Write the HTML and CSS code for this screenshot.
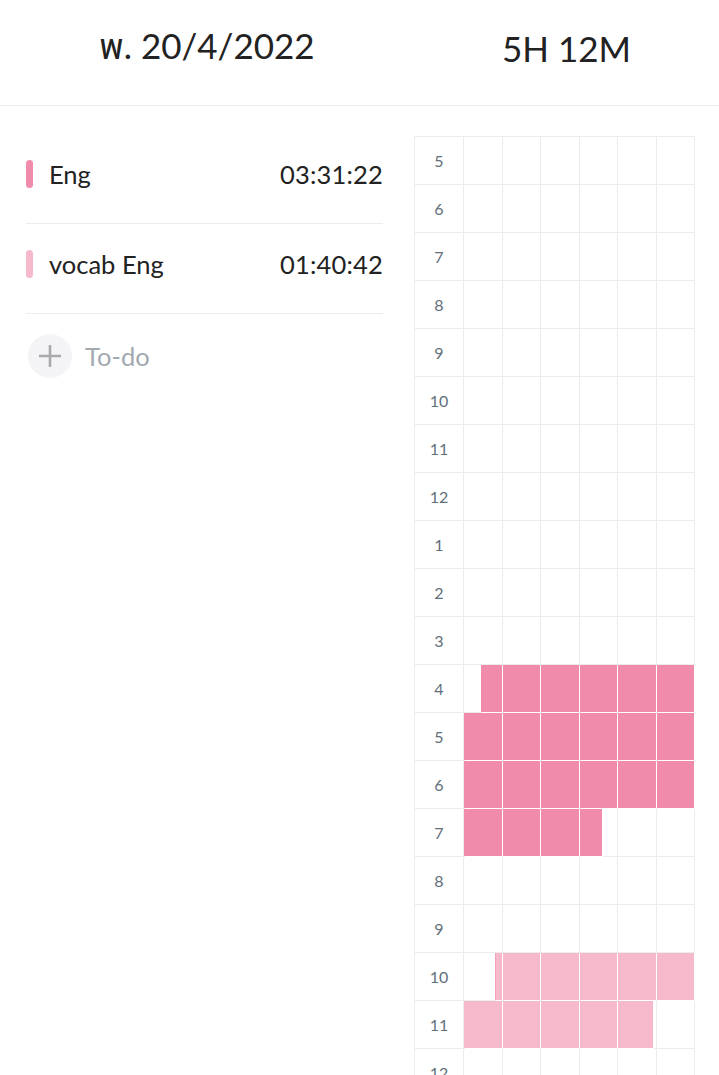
FILE: index.html
```html
<!DOCTYPE html>
<html lang="th">
<head>
<meta charset="utf-8">
<title>Timetable</title>
<link rel="stylesheet" href="styles.css">
</head>
<body>
<header class="top">
  <div class="top-col top-left"><span class="date">พ. 20/4/2022</span></div>
  <div class="top-col top-right"><span class="total">5H 12M</span></div>
</header>
<main class="main">
  <section class="side">
    <div class="item">
      <span class="bar bar-dark"></span>
      <span class="name">Eng</span>
      <span class="time">03:31:22</span>
    </div>
    <div class="item">
      <span class="bar bar-light"></span>
      <span class="name">vocab Eng</span>
      <span class="time">01:40:42</span>
    </div>
    <div class="todo">
      <span class="plus">
        <svg width="24" height="24" viewBox="0 0 24 24"><path d="M12 1v22M1 12h22" stroke="#a9a9ab" stroke-width="2.6" fill="none"/></svg>
      </span>
      <span class="todo-text">To-do</span>
    </div>
  </section>
  <section class="sched">
    <div class="grid" id="grid"></div>
  </section>
</main>
<script src="app.js"></script>
</body>
</html>
```
FILE: styles.css
```css
html, body {
  margin: 0;
  padding: 0;
  overflow: hidden;
  background: #fff;
}
body {
  font-family: "Lato", "Noto Sans", "Noto Sans Thai", "DejaVu Sans", sans-serif;
  color: #222;
}
.top {
  display: flex;
  height: 106px;
  box-sizing: border-box;
  border-bottom: 1px solid #ededed;
}
.top-col {
  display: flex;
  align-items: center;
  justify-content: center;
  padding-bottom: 9px;
  box-sizing: border-box;
  font-size: 35px;
  color: #222;
}
.top-left { width: 414px; }
.top-right { flex: 1; }

.main {
  display: flex;
  align-items: flex-start;
}
.side {
  width: 414px;
  box-sizing: border-box;
  padding: 28px 31px 0 26px;
}
.item {
  display: flex;
  align-items: center;
  height: 90px;
  box-sizing: border-box;
  border-bottom: 1px solid #ececec;
  padding-bottom: 9px;
  font-size: 25.5px;
}
.bar {
  width: 7px;
  height: 28px;
  border-radius: 4px;
  margin-right: 16px;
  flex: none;
}
.bar-dark { background: #f08bab; }
.bar-light { background: #f6b9cc; }
.name { flex: 1; }
.time { letter-spacing: 0.2px; }
.todo {
  display: flex;
  align-items: center;
  height: 84px;
}
.plus {
  width: 44px;
  height: 44px;
  border-radius: 50%;
  background: #f4f4f6;
  display: flex;
  align-items: center;
  justify-content: center;
  margin-left: 2px;
  margin-right: 13px;
}
.todo-text {
  font-size: 25.5px;
  color: #a2a9b0;
}

.sched {
  padding-top: 30px;
}
.grid {
  display: grid;
  grid-template-columns: 49px repeat(6, 38.5px);
  grid-auto-rows: 48px;
  border-top: 1px solid #ececec;
  border-left: 1px solid #ececec;
}
.cell {
  border-right: 1px solid #ececec;
  border-bottom: 1px solid #ececec;
  position: relative;
}
.label {
  display: flex;
  align-items: center;
  justify-content: center;
  font-size: 16px;
  color: #5f6f7b;
}
.fill {
  position: absolute;
  top: 0;
  bottom: 0;
  box-shadow: 1px 1px 0 #fff;
}
.fill-dark { background: #f08bab; }
.fill-light { background: #f6b9cc; }
.fill-edge { border-left: 1px solid #f1a0b9; box-sizing: border-box; }
```
FILE: app.js
```js
(function () {
  var hours = [5,6,7,8,9,10,11,12,1,2,3,4,5,6,7,8,9,10,11,12,1];
  // fills: row index -> array of [col, startPct, widthPct, kind]
  var fills = {
    11: [[0,44,56,'dark'],[1,0,100,'dark'],[2,0,100,'dark'],[3,0,100,'dark'],[4,0,100,'dark'],[5,0,100,'dark']],
    12: [[0,0,100,'dark'],[1,0,100,'dark'],[2,0,100,'dark'],[3,0,100,'dark'],[4,0,100,'dark'],[5,0,100,'dark']],
    13: [[0,0,100,'dark'],[1,0,100,'dark'],[2,0,100,'dark'],[3,0,100,'dark'],[4,0,100,'dark'],[5,0,100,'dark']],
    14: [[0,0,100,'dark'],[1,0,100,'dark'],[2,0,100,'dark'],[3,0,61,'dark']],
    17: [[0,83,17,'edge'],[1,0,100,'light'],[2,0,100,'light'],[3,0,100,'light'],[4,0,100,'light'],[5,0,100,'light']],
    18: [[0,0,100,'light'],[1,0,100,'light'],[2,0,100,'light'],[3,0,100,'light'],[4,0,94,'light']]
  };
  var grid = document.getElementById('grid');
  hours.forEach(function (h, r) {
    var lab = document.createElement('div');
    lab.className = 'cell label';
    lab.textContent = h;
    grid.appendChild(lab);
    for (var c = 0; c < 6; c++) {
      var cell = document.createElement('div');
      cell.className = 'cell';
      (fills[r] || []).forEach(function (f) {
        if (f[0] !== c) return;
        var d = document.createElement('div');
        d.className = 'fill ' + (f[3] === 'dark' ? 'fill-dark' : f[3] === 'edge' ? 'fill-light fill-edge' : 'fill-light');
        d.style.left = f[1] + '%';
        d.style.width = f[2] + '%';
        cell.appendChild(d);
      });
      grid.appendChild(cell);
    }
  });
})();
```
